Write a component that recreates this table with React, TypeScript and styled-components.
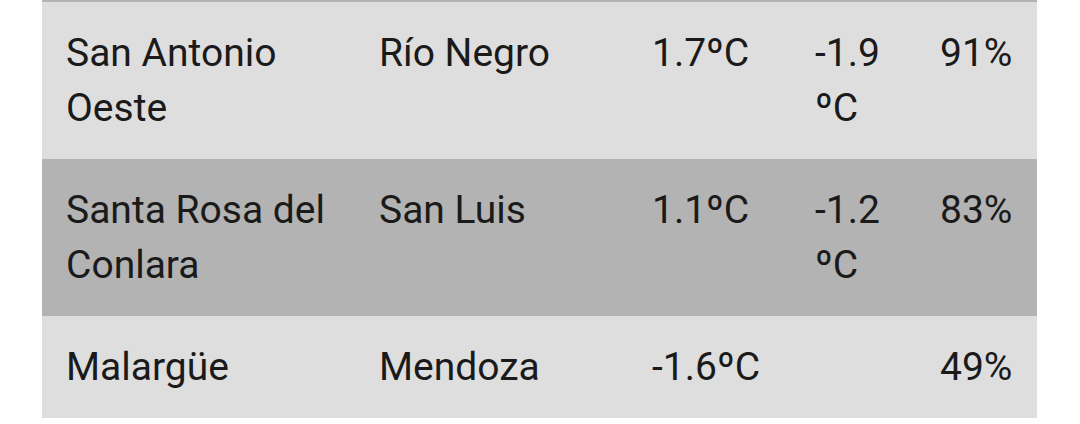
import React from "react";
import styled, { createGlobalStyle } from "styled-components";

type Station = {
    name: string;
    province: string;
    temp: string;
    feels: string;
    humidity: string;
};

const stations: Station[] = [
    { name: "San Antonio Oeste", province: "Río Negro", temp: "1.7ºC", feels: "-1.9 ºC", humidity: "91%" },
    { name: "Santa Rosa del Conlara", province: "San Luis", temp: "1.1ºC", feels: "-1.2 ºC", humidity: "83%" },
    { name: "Malargüe", province: "Mendoza", temp: "-1.6ºC", feels: "", humidity: "49%" },
];

const App = () => {
    return (
        <>
            <GlobalStyle />
            <Page>
                <Table>
                    {stations.map((s, i) => (
                        <Row key={s.name} shaded={i % 2 === 1}>
                            <Cell>{s.name}</Cell>
                            <Cell>{s.province}</Cell>
                            <Cell>{s.temp}</Cell>
                            <Cell>{s.feels}</Cell>
                            <Cell>{s.humidity}</Cell>
                        </Row>
                    ))}
                </Table>
            </Page>
        </>
    );
};

const GlobalStyle = createGlobalStyle`
    body {
        margin: 0;
        background: #ffffff;
        font-family: Roboto, "Noto Sans", sans-serif;
    }
`;

const Page = styled.div`
    padding-left: 42px;
`;

const Table = styled.div`
    width: 995px;
    border-top: 2px solid #b3b3b3;
`;

const Row = styled.div<{ shaded: boolean }>`
    display: grid;
    grid-template-columns: 313px 273px 163px 125px 121px;
    padding: 24px 0 23px;
    background: ${(p) => (p.shaded ? "#b3b3b3" : "#dedede")};
`;

const Cell = styled.div`
    padding-left: 24px;
    font-size: 39px;
    line-height: 55px;
    color: #1a1a1a;
`;

export default App;
